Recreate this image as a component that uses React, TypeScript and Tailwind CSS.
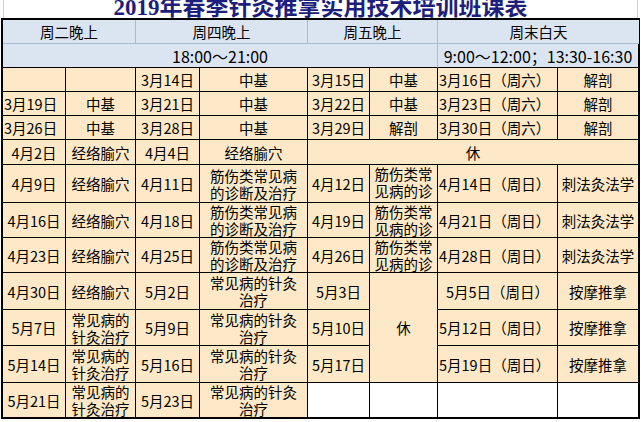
import React from "react";

type Td = {
  t?: string;
  cls?: string;
  left?: boolean;
  top?: boolean;
  white?: boolean;
  pad?: boolean;
};

const JS = "筋伤类常见病的诊断及治疗";
// 第六列宽度不够，只露出前两行
const JS_CUT = "筋伤类常见病的诊";
const ZL = "常见病的针灸治疗";

// 每行 8 列，合并单元格用 col-span / row-span
const ROWS: Td[][] = [
  [{}, {}, { t: "3月14日" }, { t: "中基" }, { t: "3月15日" }, { t: "中基" }, { t: "3月16日（周六）", left: true }, { t: "解剖" }],
  [{ t: "3月19日", left: true }, { t: "中基" }, { t: "3月21日" }, { t: "中基" }, { t: "3月22日" }, { t: "中基" }, { t: "3月23日（周六）", left: true }, { t: "解剖" }],
  [{ t: "3月26日", left: true }, { t: "中基" }, { t: "3月28日" }, { t: "中基" }, { t: "3月29日" }, { t: "解剖" }, { t: "3月30日（周六）", left: true }, { t: "解剖" }],
  [{ t: "4月2日" }, { t: "经络腧穴" }, { t: "4月4日" }, { t: "经络腧穴" }, { t: "休", cls: "col-span-4" }],
  [{ t: "4月9日" }, { t: "经络腧穴" }, { t: "4月11日" }, { t: JS, pad: true }, { t: "4月12日" }, { t: JS_CUT, top: true }, { t: "4月14日（周日）", left: true }, { t: "刺法灸法学" }],
  [{ t: "4月16日" }, { t: "经络腧穴" }, { t: "4月18日" }, { t: JS, pad: true }, { t: "4月19日" }, { t: JS_CUT, top: true }, { t: "4月21日（周日）", left: true }, { t: "刺法灸法学" }],
  [{ t: "4月23日" }, { t: "经络腧穴" }, { t: "4月25日" }, { t: JS, pad: true }, { t: "4月26日" }, { t: JS_CUT, top: true }, { t: "4月28日（周日）", left: true }, { t: "刺法灸法学" }],
  [{ t: "4月30日" }, { t: "经络腧穴" }, { t: "5月2日" }, { t: ZL, pad: true }, { t: "5月3日" }, { t: "休", cls: "row-span-3" }, { t: "5月5日（周日）" }, { t: "按摩推拿" }],
  [{ t: "5月7日" }, { t: ZL }, { t: "5月9日" }, { t: ZL, pad: true }, { t: "5月10日" }, { t: "5月12日（周日）", left: true }, { t: "按摩推拿" }],
  [{ t: "5月14日" }, { t: ZL }, { t: "5月16日" }, { t: ZL, pad: true }, { t: "5月17日" }, { t: "5月19日（周日）", left: true }, { t: "按摩推拿" }],
  [{ t: "5月21日" }, { t: ZL }, { t: "5月23日" }, { t: ZL, pad: true }, { white: true }, { white: true }, { white: true }, { white: true }],
];

function Cell({ t, cls = "", left, top, white, pad }: Td) {
  return (
    <div
      className={`flex overflow-hidden border-r border-b border-black ${
        top ? "items-start leading-[17px]" : "items-center leading-[17px]"
      } ${left ? "justify-start pl-px text-left" : "justify-center text-center"} ${
        pad ? "px-[6px]" : ""
      } ${white ? "bg-white" : "bg-[#fde9c7]"} ${cls}`}
    >
      {t && <span>{t}</span>}
    </div>
  );
}

export default function App() {
  return (
    <div className="w-[641px] h-[422px] overflow-hidden bg-white text-black font-['Noto_Sans_CJK_SC','Liberation_Sans',sans-serif] text-[14.5px]">
      <div className="ml-[3px] w-[635px] h-[18px] overflow-hidden border-x border-[#d0d0d0]">
        <div className="-mt-[4px] text-center text-[23px] leading-[23px] font-bold text-[#1e1e7c] font-['Liberation_Serif','Noto_Sans_CJK_SC',serif]">
          2019年春季针灸推拿实用技术培训班课表
        </div>
      </div>

      <div className="ml-px w-[639px] grid grid-cols-[63px_70px_64px_108px_62px_68px_120px_81px] grid-rows-[24px_24px_24px_24px_24px_25px_38px_35px_35px_37px_36px_37px_35px] border-l-2 border-t-2 border-r border-b border-black">
        {/* 表头 */}
        <div className="col-span-2 flex items-center justify-center bg-[#dbe5f1] border-r border-b border-[#a9bbcf]">周二晚上</div>
        <div className="col-span-2 flex items-center justify-center bg-[#dbe5f1] border-r border-b border-[#a9bbcf]">周四晚上</div>
        <div className="col-span-2 flex items-center justify-center bg-[#dbe5f1] border-r border-b border-[#a9bbcf]">周五晚上</div>
        <div className="col-span-2 flex items-center justify-center bg-[#dbe5f1] border-b border-[#a9bbcf] border-r-black">周末白天</div>

        <div className="col-span-6 flex items-center justify-center bg-[#dbe5f1] text-[16px] border-r border-r-[#a9bbcf] border-b border-b-black">
          18:00～21:00
        </div>
        <div className="col-span-2 flex items-center justify-center bg-[#dbe5f1] text-[16px] border-r border-b border-black">
          9:00～12:00；13:30-16:30
        </div>

        {ROWS.map((row, i) =>
          row.map((c, j) => <Cell key={`${i}-${j}`} {...c} />),
        )}
      </div>
    </div>
  );
}
